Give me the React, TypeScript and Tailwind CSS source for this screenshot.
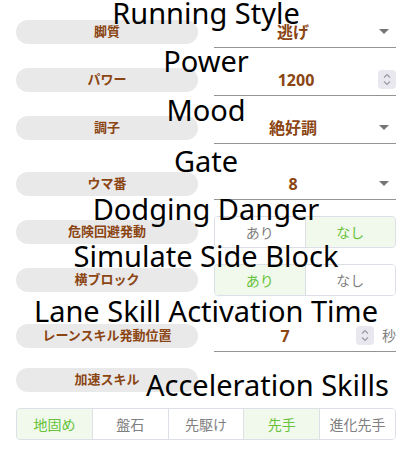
import React from "react";

const brown = "text-[#8b4513]";

function Pill({ label }: { label: string }) {
  return (
    <div className={`flex h-6 w-[182px] shrink-0 items-center justify-center rounded-full bg-[#e9e9e9] text-[13px] font-bold ${brown}`}>
      {label}
    </div>
  );
}

function Title({ text, className }: { text: string; className: string }) {
  return (
    <div className={`pointer-events-none absolute whitespace-nowrap font-['Noto_Sans',sans-serif] text-[29px] leading-7 text-black ${className}`}>
      {text}
    </div>
  );
}

function Caret() {
  return (
    <svg className="absolute right-[7px]" width="10" height="5" viewBox="0 0 10 5">
      <path d="M0 0h10L5 5z" fill="#757575" />
    </svg>
  );
}

function Spinner() {
  return (
    <div className="flex h-[19px] w-[18px] flex-col items-center justify-center gap-[3px] rounded-sm bg-[#e8e8ee]">
      <svg width="8" height="5" viewBox="0 0 8 5">
        <path d="M1 4.5L4 1.5l3 3" fill="none" stroke="#9a9aa6" strokeWidth="1.2" />
      </svg>
      <svg width="8" height="5" viewBox="0 0 8 5">
        <path d="M1 0.5L4 3.5l3-3" fill="none" stroke="#9a9aa6" strokeWidth="1.2" />
      </svg>
    </div>
  );
}

function SelectField({ value }: { value: string }) {
  return (
    <div className="relative flex h-8 w-[182px] items-center border-b border-[#949494]">
      <span className={`flex-1 pr-6 text-center text-[16px] font-bold ${brown}`}>{value}</span>
      <Caret />
    </div>
  );
}

function NumberField({ value, suffix }: { value: string; suffix?: string }) {
  return (
    <div className="flex h-8 w-[182px] items-center border-b border-[#949494]">
      <div className="relative flex flex-1 items-center">
        <span className={`flex-1 pr-[18px] text-center text-[16px] font-bold ${brown}`}>{value}</span>
        <div className="absolute right-0">
          <Spinner />
        </div>
      </div>
      {suffix && <span className="ml-2 text-[14px] text-[#808080]">{suffix}</span>}
    </div>
  );
}

function Segmented({ options, active, className }: { options: string[]; active: string[]; className: string }) {
  return (
    <div className={`flex h-8 overflow-hidden rounded border border-[#dcdfe6] ${className}`}>
      {options.map((o, i) => {
        const on = active.includes(o);
        return (
          <div
            key={o}
            className={`flex flex-1 items-center justify-center text-[14px] ${i > 0 ? "border-l border-[#dcdfe6]" : ""} ${
              on ? "bg-[#f0f9eb] text-[#67c23a]" : "bg-white text-[#808080]"
            }`}
          >
            {o}
          </div>
        );
      })}
    </div>
  );
}

function Row({ label, title, titleClass, className, children }: {
  label: string;
  title: string;
  titleClass: string;
  className?: string;
  children?: React.ReactNode;
}) {
  return (
    <div className={`relative flex h-8 items-center gap-4 ${className ?? ""}`}>
      <Pill label={label} />
      {children}
      <Title text={title} className={titleClass} />
    </div>
  );
}

export default function App() {
  return (
    <div className="h-[456px] w-[412px] overflow-hidden bg-white px-4 pt-4 font-['Noto_Sans','Noto_Sans_CJK_JP',sans-serif]">
      <Row label="脚質" title="Running Style" titleClass="inset-x-0 top-[-17px] text-center">
        <SelectField value="逃げ" />
      </Row>
      <Row label="パワー" title="Power" titleClass="inset-x-0 top-[-17px] text-center" className="mt-4">
        <NumberField value="1200" />
      </Row>
      <Row label="調子" title="Mood" titleClass="inset-x-0 top-[-16px] text-center" className="mt-4">
        <SelectField value="絶好調" />
      </Row>
      <Row label="ウマ番" title="Gate" titleClass="inset-x-0 top-[-21px] text-center" className="mt-6">
        <SelectField value="8" />
      </Row>
      <Row label="危険回避発動" title="Dodging Danger" titleClass="inset-x-0 top-[-21px] text-center" className="mt-4">
        <Segmented options={["あり", "なし"]} active={["なし"]} className="w-[182px]" />
      </Row>
      <Row label="横ブロック" title="Simulate Side Block" titleClass="inset-x-0 top-[-22px] text-center" className="mt-4">
        <Segmented options={["あり", "なし"]} active={["あり"]} className="w-[182px]" />
      </Row>
      <Row label="レーンスキル発動位置" title="Lane Skill Activation Time" titleClass="inset-x-0 top-[-23px] text-center" className="mt-6">
        <NumberField value="7" suffix="秒" />
      </Row>
      <Row label="加速スキル" title="Acceleration Skills" titleClass="left-[130px] top-[7px]" className="mt-3" />
      <Segmented
        options={["地固め", "盤石", "先駆け", "先手", "進化先手"]}
        active={["地固め", "先手"]}
        className="mt-3 w-full"
      />
    </div>
  );
}
